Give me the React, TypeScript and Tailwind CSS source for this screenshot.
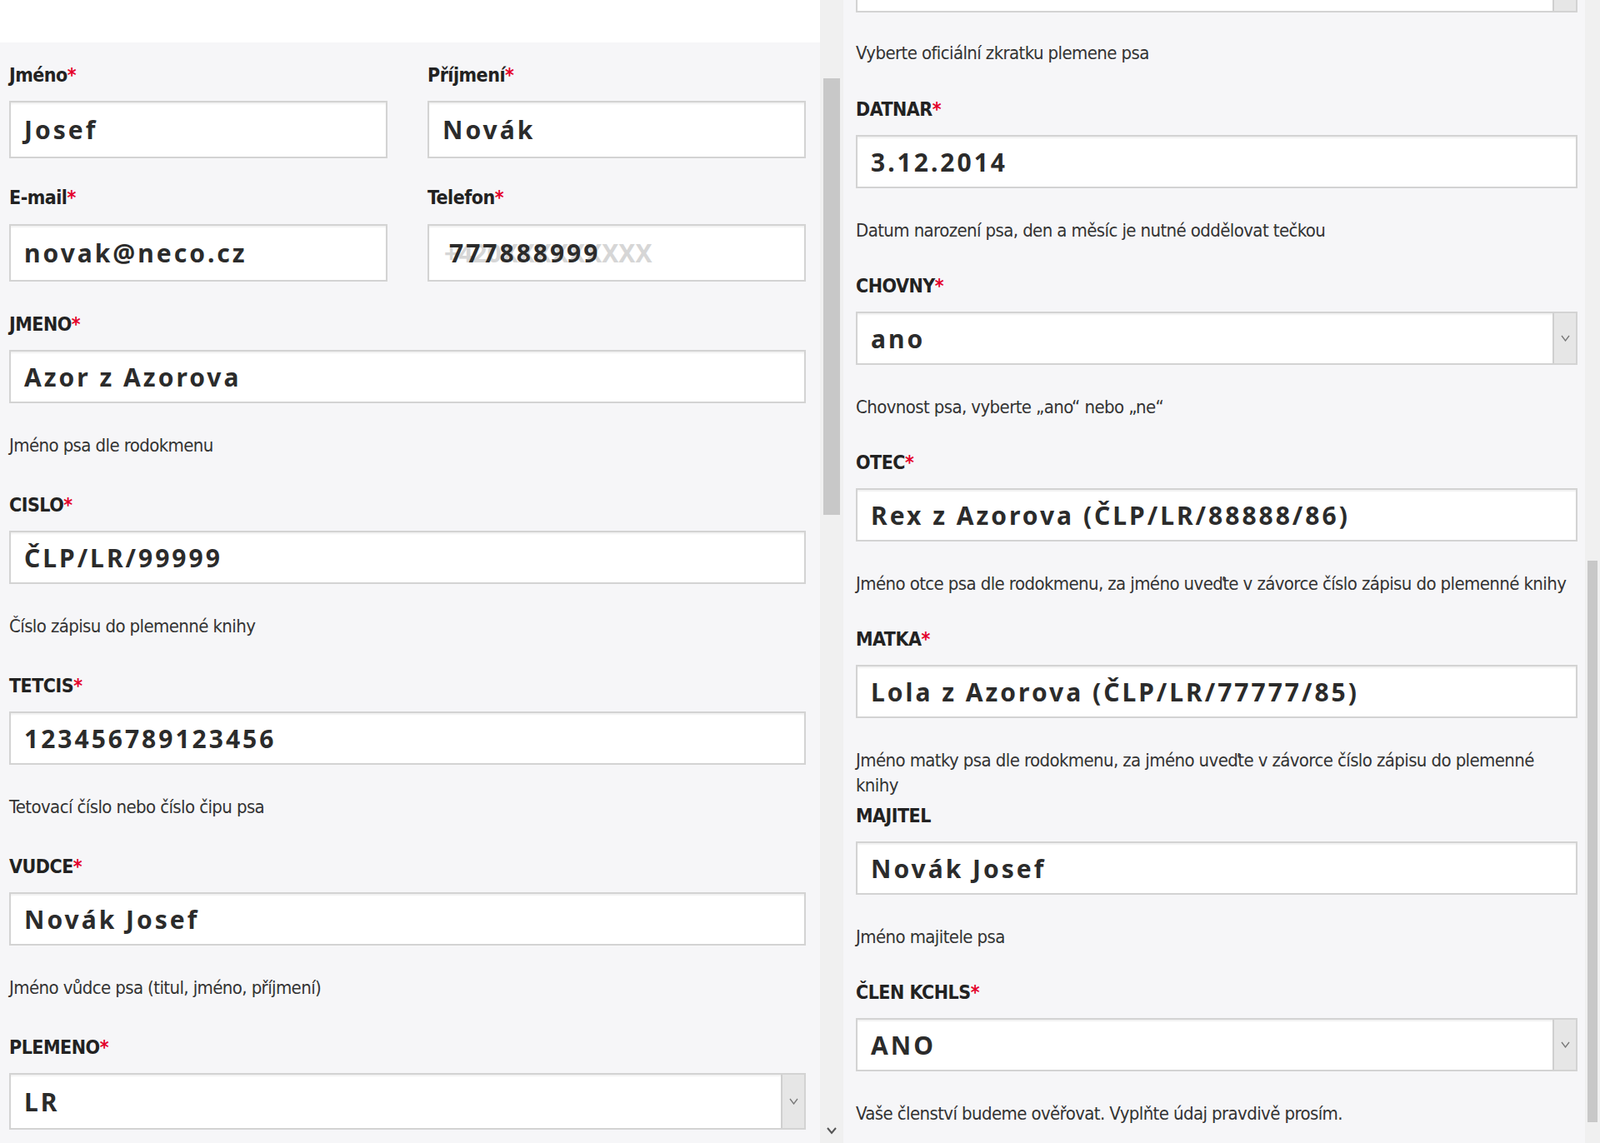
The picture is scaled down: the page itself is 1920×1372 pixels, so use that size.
const labelFont = { fontFamily: '"DejaVu Sans Condensed", "Open Sans", sans-serif' };

function Label({ text, req = true }: { text: string; req?: boolean }) {
  return (
    <div
      className="h-[32px] leading-[32px] text-[23px] font-bold text-[#222] tracking-[-0.5px]"
      style={labelFont}
    >
      {text}
      {req && <span className="text-[#e4002b]">*</span>}
    </div>
  );
}

function Help({ text }: { text: string }) {
  return (
    <div
      className="mt-[36px] h-[30px] leading-[30px] text-[22px] text-[#333] tracking-[-0.6px]"
      style={labelFont}
    >
      {text}
    </div>
  );
}

function Box({ value, select = false, h = "h-[64px]", children }: { value?: string; select?: boolean; h?: string; children?: React.ReactNode }) {
  return (
    <div
      className={`${h} relative flex items-center bg-white border-2 border-[#d3d3d3] shadow-[inset_0_2px_2px_rgba(0,0,0,0.06)] pl-[16px] font-['Lato',sans-serif] font-bold text-[30px] tracking-[3px] text-[#2b2b2b]`}
    >
      {children ?? value}
      {select && (
        <div className="absolute right-0 top-0 bottom-0 w-[28px] bg-[#e6e6e6] border-l-2 border-[#cfcfcf] flex items-center justify-center">
          <svg width="11" height="8" viewBox="0 0 11 8"><path d="M1 1l4.5 6L10 1" fill="none" stroke="#777" strokeWidth="1.3" /></svg>
        </div>
      )}
    </div>
  );
}

function Field({ label, value, help, select, req = true, gap = "mt-[37px]" }: { label: string; value: string; help: string; select?: boolean; req?: boolean; gap?: string }) {
  return (
    <div className={gap}>
      <Label text={label} req={req} />
      <div className="mt-[15px]">
        <Box value={value} select={select} />
      </div>
      <Help text={help} />
    </div>
  );
}

export default function App() {
  return (
    <div className="w-[1920px] h-[1372px] overflow-hidden flex bg-[#f6f6f8]">
      {/* left panel */}
      <div className="w-[984px] flex flex-col">
        <div className="h-[51px] bg-white shrink-0" />
        <div className="pl-[11px] pr-[17px] pt-[23px]">
          <div className="grid grid-cols-2 gap-x-[48px]">
            <div>
              <Label text="Jméno" />
              <div className="mt-[15px]"><Box h="h-[69px]" value="Josef" /></div>
            </div>
            <div>
              <Label text="Příjmení" />
              <div className="mt-[15px]"><Box h="h-[69px]" value="Novák" /></div>
            </div>
            <div className="mt-[31px]">
              <Label text="E-mail" />
              <div className="mt-[16px]"><Box h="h-[69px]" value="novak@neco.cz" /></div>
            </div>
            <div className="mt-[31px]">
              <Label text="Telefon" />
              <div className="mt-[16px]">
                <Box h="h-[69px]">
                  <span className="absolute left-[18px] text-[#d6d6d6] tracking-[0px]">+420XXXXXXXXX</span>
                  <span className="relative pl-[8px]">777888999</span>
                </Box>
              </div>
            </div>
          </div>
          <div className="-mt-[2px]">
            <Field label="JMENO" value="Azor z Azorova" help="Jméno psa dle rodokmenu" />
            <Field gap="mt-[40px]" label="CISLO" value="ČLP/LR/99999" help="Číslo zápisu do plemenné knihy" />
            <Field gap="mt-[40px]" label="TETCIS" value="123456789123456" help="Tetovací číslo nebo číslo čipu psa" />
            <Field gap="mt-[40px]" label="VUDCE" value="Novák Josef" help="Jméno vůdce psa (titul, jméno, příjmení)" />
            <div className="mt-[40px]">
              <Label text="PLEMENO" />
              <div className="mt-[15px]"><Box h="h-[68px]" value="LR" select /></div>
            </div>
          </div>
        </div>
      </div>
      {/* left scrollbar */}
      <div className="w-[28px] bg-[#f0f0f0] relative">
        <div className="absolute left-[4px] right-[4px] top-[94px] h-[524px] bg-[#c8c8c8]" />
        <div className="absolute left-0 right-0 bottom-[10px] flex justify-center">
          <svg width="12" height="9" viewBox="0 0 12 9"><path d="M1 1l5 6 5-6" fill="none" stroke="#555" strokeWidth="2" /></svg>
        </div>
      </div>
      {/* right panel */}
      <div className="flex-1 pl-[15px] pr-[9px]">
        <div className="-mt-[49px]">
          <Box value="" select />
        </div>
        <div className="-mt-[2px]">
          <Help text="Vyberte oficiální zkratku plemene psa" />
        </div>
        <div className="mt-[2px]">
          <Field gap="mt-[36px]" label="DATNAR" value="3.12.2014" help="Datum narození psa, den a měsíc je nutné oddělovat tečkou" />
          <Field gap="mt-[35px]" label="CHOVNY" value="ano" select help="Chovnost psa, vyberte „ano“ nebo „ne“" />
          <Field gap="mt-[35px]" label="OTEC" value="Rex z Azorova (ČLP/LR/88888/86)" help="Jméno otce psa dle rodokmenu, za jméno uveďte v závorce číslo zápisu do plemenné knihy" />
          <Field gap="mt-[35px]" label="MATKA" value="Lola z Azorova (ČLP/LR/77777/85)" help="Jméno matky psa dle rodokmenu, za jméno uveďte v závorce číslo zápisu do plemenné knihy" />
          <Field gap="mt-[35px]" label="MAJITEL" value="Novák Josef" req={false} help="Jméno majitele psa" />
          <Field gap="mt-[35px]" label="ČLEN KCHLS" value="ANO" select help="Vaše členství budeme ověřovat. Vyplňte údaj pravdivě prosím." />
        </div>
      </div>
      {/* right scrollbar */}
      <div className="w-[18px] bg-[#f0f0f0] relative">
        <div className="absolute left-[3px] right-[3px] top-[673px] h-[674px] bg-[#c8c8c8]" />
      </div>
    </div>
  );
}
